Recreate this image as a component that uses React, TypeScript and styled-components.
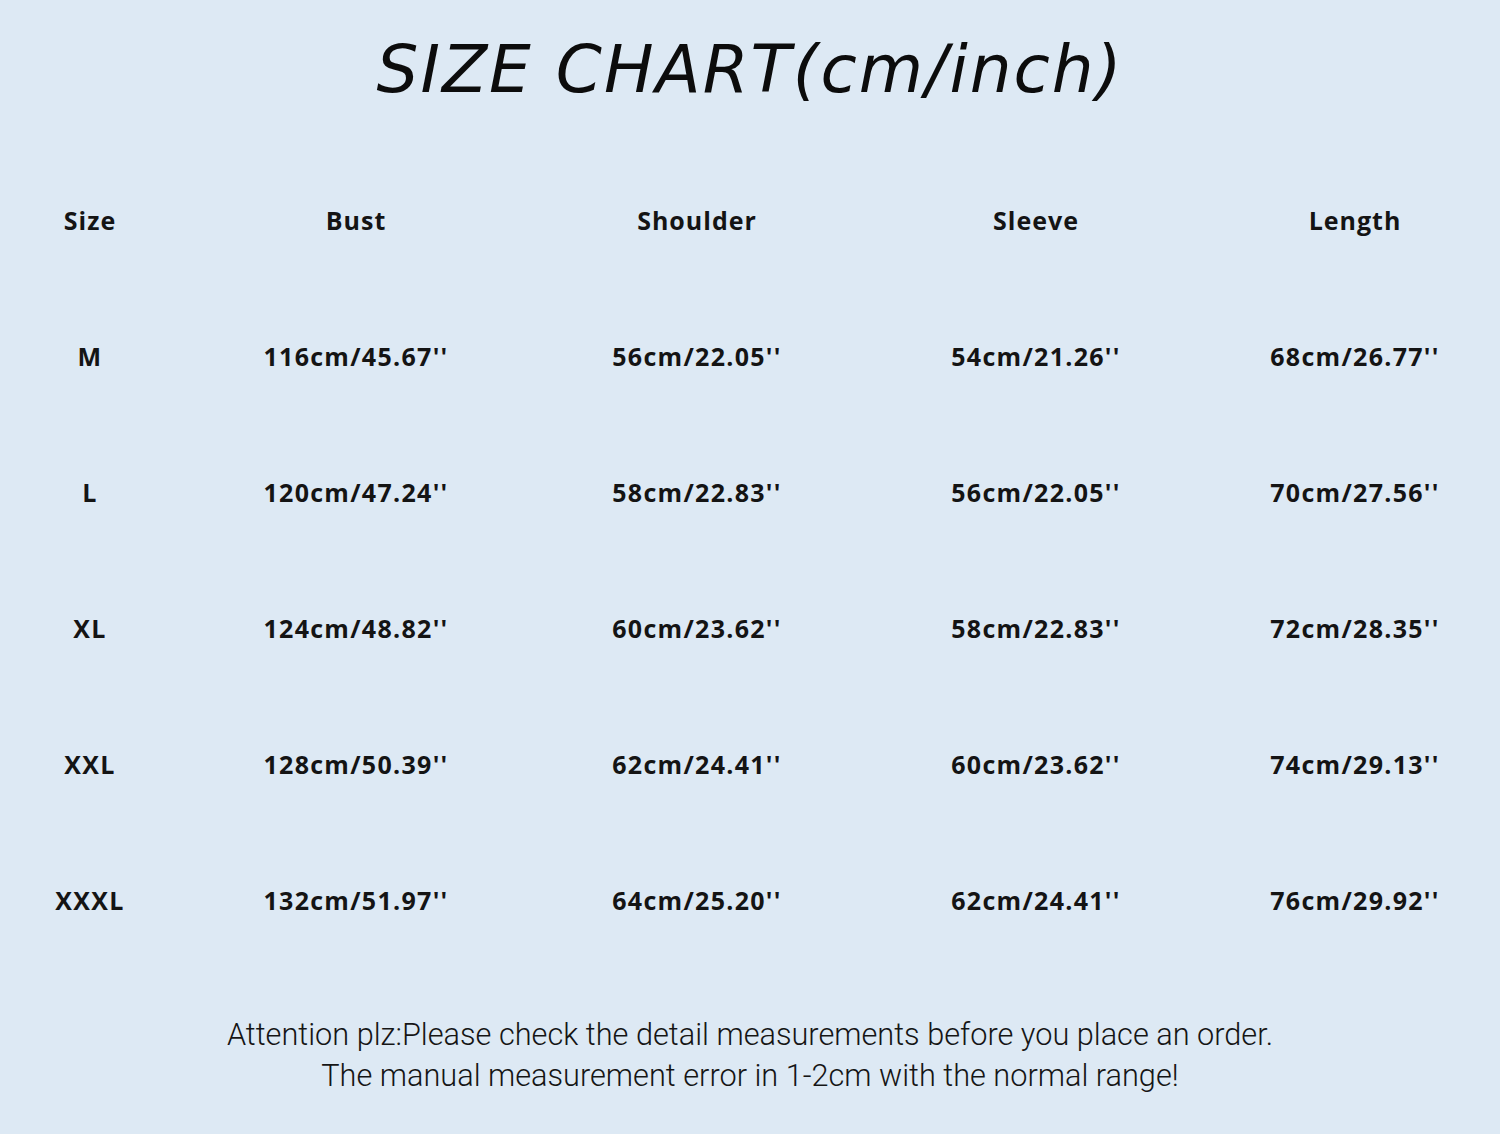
import React from 'react';
import styled, {createGlobalStyle} from 'styled-components';

const GlobalStyle = createGlobalStyle`
  html, body {
    margin: 0;
    padding: 0;
    background: #dde9f4;
  }
`;

const Page = styled.div`
  width: 1500px;
  height: 1134px;
  background: #dde9f4;
  display: flex;
  flex-direction: column;
  color: #111;
  overflow: hidden;
`;

const Title = styled.h1`
  margin: 0;
  height: 152px;
  display: flex;
  justify-content: center;
  align-items: flex-start;
  padding-top: 27px;
  box-sizing: border-box;
  font-family: "DejaVu Sans", sans-serif;
  font-weight: normal;
  font-style: italic;
  font-size: 66px;
  line-height: 86px;
  letter-spacing: 2px;
  color: #0c0c0c;
`;

const Table = styled.div`
  display: grid;
  grid-template-columns: 180px 352px 330px 348px 290px;
  grid-auto-rows: 136px;
`;

const Cell = styled.div<{ $head?: boolean }>`
  display: flex;
  align-items: center;
  justify-content: center;
  font-family: "Open Sans", sans-serif;
  font-weight: 700;
  font-size: 25px;
  letter-spacing: ${p => (p.$head ? '1px' : '1.3px')};
  color: #141414;
  white-space: nowrap;
`;

const Footer = styled.div`
  padding-top: 46px;
  display: flex;
  flex-direction: column;
  align-items: center;
  font-family: "Roboto", sans-serif;
  font-weight: 300;
  font-size: 30.7px;
  line-height: 41px;
  color: #151515;
`;

const headers = ['Size', 'Bust', 'Shoulder', 'Sleeve', 'Length'];

const rows = [
    ['M', "116cm/45.67''", "56cm/22.05''", "54cm/21.26''", "68cm/26.77''"],
    ['L', "120cm/47.24''", "58cm/22.83''", "56cm/22.05''", "70cm/27.56''"],
    ['XL', "124cm/48.82''", "60cm/23.62''", "58cm/22.83''", "72cm/28.35''"],
    ['XXL', "128cm/50.39''", "62cm/24.41''", "60cm/23.62''", "74cm/29.13''"],
    ['XXXL', "132cm/51.97''", "64cm/25.20''", "62cm/24.41''", "76cm/29.92''"],
];

export default function App() {
    return (
        <>
            <GlobalStyle/>
            <Page>
                <Title>SIZE CHART(cm/inch)</Title>

                <Table>
                    {headers.map(h => <Cell key={h} $head>{h}</Cell>)}
                    {rows.map(r => r.map((v, i) => <Cell key={r[0] + i}>{v}</Cell>))}
                </Table>

                <Footer>
                    <div>Attention plz:Please check the detail measurements before you place an order.</div>
                    <div>The manual measurement error in 1-2cm with the normal range!</div>
                </Footer>
            </Page>
        </>
    );
}
